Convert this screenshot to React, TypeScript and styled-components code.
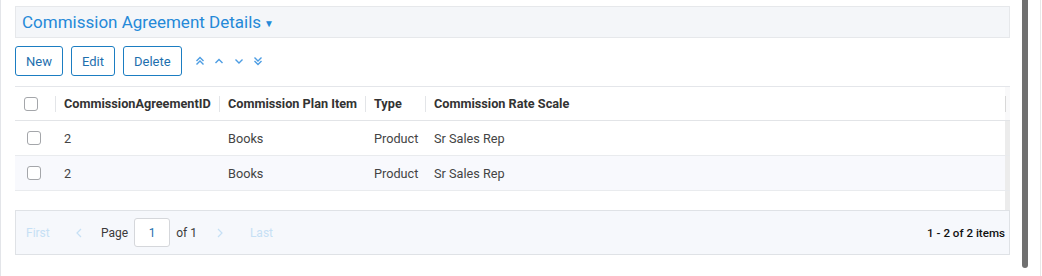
import React from "react";
import styled, { createGlobalStyle } from "styled-components";

const GlobalStyle = createGlobalStyle`
  html, body {
    margin: 0;
    padding: 0;
    background: #ffffff;
  }
  body {
    font-family: Roboto, "Liberation Sans", Arial, sans-serif;
    font-size: 12.7px;
    color: #333333;
  }
`;

const Page = styled.div`
  display: flex;
  height: 276px;
  width: 1042px;
  box-sizing: border-box;
  border-left: 1px solid #e3e5e9;
  overflow: hidden;
`;

const Main = styled.div`
  width: 995px;
  margin-left: 14px;
  padding-top: 6px;
  display: flex;
  flex-direction: column;
`;

const ScrollThumb = styled.div`
  width: 6px;
  height: 268px;
  margin-left: 12px;
  background: #707070;
  border-radius: 0 0 3px 3px;
`;

const EdgeLine = styled.div`
  width: 1px;
  height: 100%;
  margin-left: 12px;
  background: #e8e8e8;
`;

const TitleBar = styled.div`
  height: 30px;
  display: flex;
  align-items: center;
  padding-left: 6px;
  background: #f4f6f9;
  border: 1px solid #e6e8eb;
  color: #2589d8;
  font-size: 17px;
`;

const Caret = styled.span`
  font-size: 10px;
  margin-left: 3px;
  margin-top: 2px;
`;

const Toolbar = styled.div`
  display: flex;
  align-items: center;
  gap: 8px;
  margin-top: 8px;
`;

const Button = styled.button`
  height: 30px;
  padding: 0 10px;
  background: #ffffff;
  border: 1px solid #1b7dc2;
  border-radius: 3px;
  color: #1e6fae;
  font-family: inherit;
  font-size: 13px;
  cursor: pointer;
`;

const ArrowGroup = styled.div`
  display: flex;
  align-items: center;
  gap: 7.5px;
  margin-left: 4px;
  color: #4d9de3;
`;

const Grid = styled.div`
  margin-top: 10px;
  border-top: 1px solid #e4e6ea;
  display: flex;
  flex-direction: column;
`;

const Row = styled.div<{ $alt?: boolean; $header?: boolean }>`
  display: grid;
  grid-template-columns: 40px 164px 146px 60px 1fr 5px;
  height: ${({ $header }) => ($header ? 33 : 34)}px;
  align-items: center;
  background: ${({ $alt }) => ($alt ? "#f8f9fd" : "#ffffff")};
  border-bottom: 1px solid ${({ $header }) => ($header ? "#e2e4e7" : "#e9ebee")};
  font-weight: ${({ $header }) => ($header ? 700 : 400)};
  color: ${({ $header }) => ($header ? "#333333" : "#444444")};
  &:last-of-type {
    border-bottom: none;
  }
`;

const Cell = styled.div<{ $sep?: boolean }>`
  height: 100%;
  display: flex;
  align-items: center;
  padding-left: 9px;
  box-sizing: border-box;
  position: relative;
  white-space: nowrap;
  overflow: hidden;
  ${({ $sep }) =>
    $sep
      ? `&::before {
    content: "";
    position: absolute;
    left: 0;
    top: 9px;
    bottom: 8px;
    width: 1px;
    background: #e3e5e8;
  }`
      : ""}
`;

const CheckCell = styled.div<{ $header?: boolean }>`
  height: 100%;
  display: flex;
  align-items: center;
  padding-left: ${({ $header }) => ($header ? 9 : 12)}px;
`;

const Check = styled.span`
  width: 12px;
  height: 12px;
  border: 1px solid #a4a6aa;
  border-radius: 3px;
  background: #fff;
`;

const ScrollGutter = styled.div<{ $header?: boolean }>`
  height: 100%;
  background: ${({ $header }) => ($header ? "#f9f9fa" : "#ececec")};
  position: relative;
  ${({ $header }) =>
    $header
      ? `&::before {
    content: "";
    position: absolute;
    left: 0;
    top: 9px;
    bottom: 8px;
    width: 1px;
    background: #d8d8d8;
  }`
      : ""}
`;

const Body = styled.div`
  display: flex;
  flex-direction: column;
`;

const Filler = styled.div`
  height: 19px;
  display: flex;
  justify-content: flex-end;
`;

const GutterFill = styled.div`
  width: 5px;
  background: #ececec;
`;

const Pager = styled.div`
  height: 43px;
  display: flex;
  align-items: center;
  background: #f6f8fc;
  border: 1px solid #dfe2e6;
  padding: 0 4px 0 10px;
  font-size: 12px;
`;

const PagerLink = styled.span<{ $w: number; $pad?: number }>`
  display: flex;
  align-items: center;
  color: #c6e0f5;
  width: ${({ $w }) => $w}px;
  padding-left: ${({ $pad }) => $pad ?? 0}px;
`;

const PagerText = styled.span`
  color: #3b3b3b;
`;

const PageInput = styled.div`
  width: 34px;
  height: 27px;
  margin: 0 6px;
  border: 1px solid #d5d7db;
  border-radius: 3px;
  background: #fff;
  display: flex;
  align-items: center;
  justify-content: center;
  color: #1e6fae;
`;

const ItemsInfo = styled.span`
  margin-left: auto;
  color: #111;
  font-weight: 500;
  font-size: 11.6px;
`;

const Chevron: React.FC<{ dir: "up" | "down"; double?: boolean }> = ({ dir, double }) => {
  const up = dir === "up";
  const p = (y: number) =>
    up ? `M2.5 ${y + 3.5} L6 ${y} L9.5 ${y + 3.5}` : `M2.5 ${y} L6 ${y + 3.5} L9.5 ${y}`;
  return (
    <svg width="12" height="12" viewBox="0 0 12 12" fill="none" stroke="currentColor" strokeWidth="1.4">
      {double ? (
        <>
          <path d={p(2.5)} />
          <path d={p(6)} />
        </>
      ) : (
        <path d={p(4.5)} />
      )}
    </svg>
  );
};

const SideChevron: React.FC<{ dir: "left" | "right" }> = ({ dir }) => (
  <svg width="6" height="10" viewBox="0 0 6 10" fill="none" stroke="currentColor" strokeWidth="1.2">
    <path d={dir === "left" ? "M5 1 L1 5 L5 9" : "M1 1 L5 5 L1 9"} />
  </svg>
);

const rows = [
  { id: "2", item: "Books", type: "Product", scale: "Sr Sales Rep" },
  { id: "2", item: "Books", type: "Product", scale: "Sr Sales Rep" },
];

export default function App() {
  return (
    <>
      <GlobalStyle />
      <Page>
        <Main>
          <TitleBar>
            Commission Agreement Details<Caret>▼</Caret>
          </TitleBar>
          <Toolbar>
            <Button>New</Button>
            <Button>Edit</Button>
            <Button>Delete</Button>
            <ArrowGroup>
              <Chevron dir="up" double />
              <Chevron dir="up" />
              <Chevron dir="down" />
              <Chevron dir="down" double />
            </ArrowGroup>
          </Toolbar>
          <Grid>
            <Row $header>
              <CheckCell $header>
                <Check />
              </CheckCell>
              <Cell $sep>CommissionAgreementID</Cell>
              <Cell $sep>Commission Plan Item</Cell>
              <Cell $sep>Type</Cell>
              <Cell $sep>Commission Rate Scale</Cell>
              <ScrollGutter $header />
            </Row>
            <Body>
              {rows.map((r, i) => (
                <Row key={i} $alt={i % 2 === 1}>
                  <CheckCell>
                    <Check />
                  </CheckCell>
                  <Cell>{r.id}</Cell>
                  <Cell>{r.item}</Cell>
                  <Cell>{r.type}</Cell>
                  <Cell>{r.scale}</Cell>
                  <ScrollGutter />
                </Row>
              ))}
              <Filler>
                <GutterFill />
              </Filler>
            </Body>
          </Grid>
          <Pager>
            <PagerLink $w={50}>First</PagerLink>
            <PagerLink $w={25}>
              <SideChevron dir="left" />
            </PagerLink>
            <PagerText>Page</PagerText>
            <PageInput>1</PageInput>
            <PagerText>of 1</PagerText>
            <PagerLink $w={33} $pad={20}>
              <SideChevron dir="right" />
            </PagerLink>
            <PagerLink $w={40}>Last</PagerLink>
            <ItemsInfo>1 - 2 of 2 items</ItemsInfo>
          </Pager>
        </Main>
        <ScrollThumb />
        <EdgeLine />
      </Page>
    </>
  );
}
